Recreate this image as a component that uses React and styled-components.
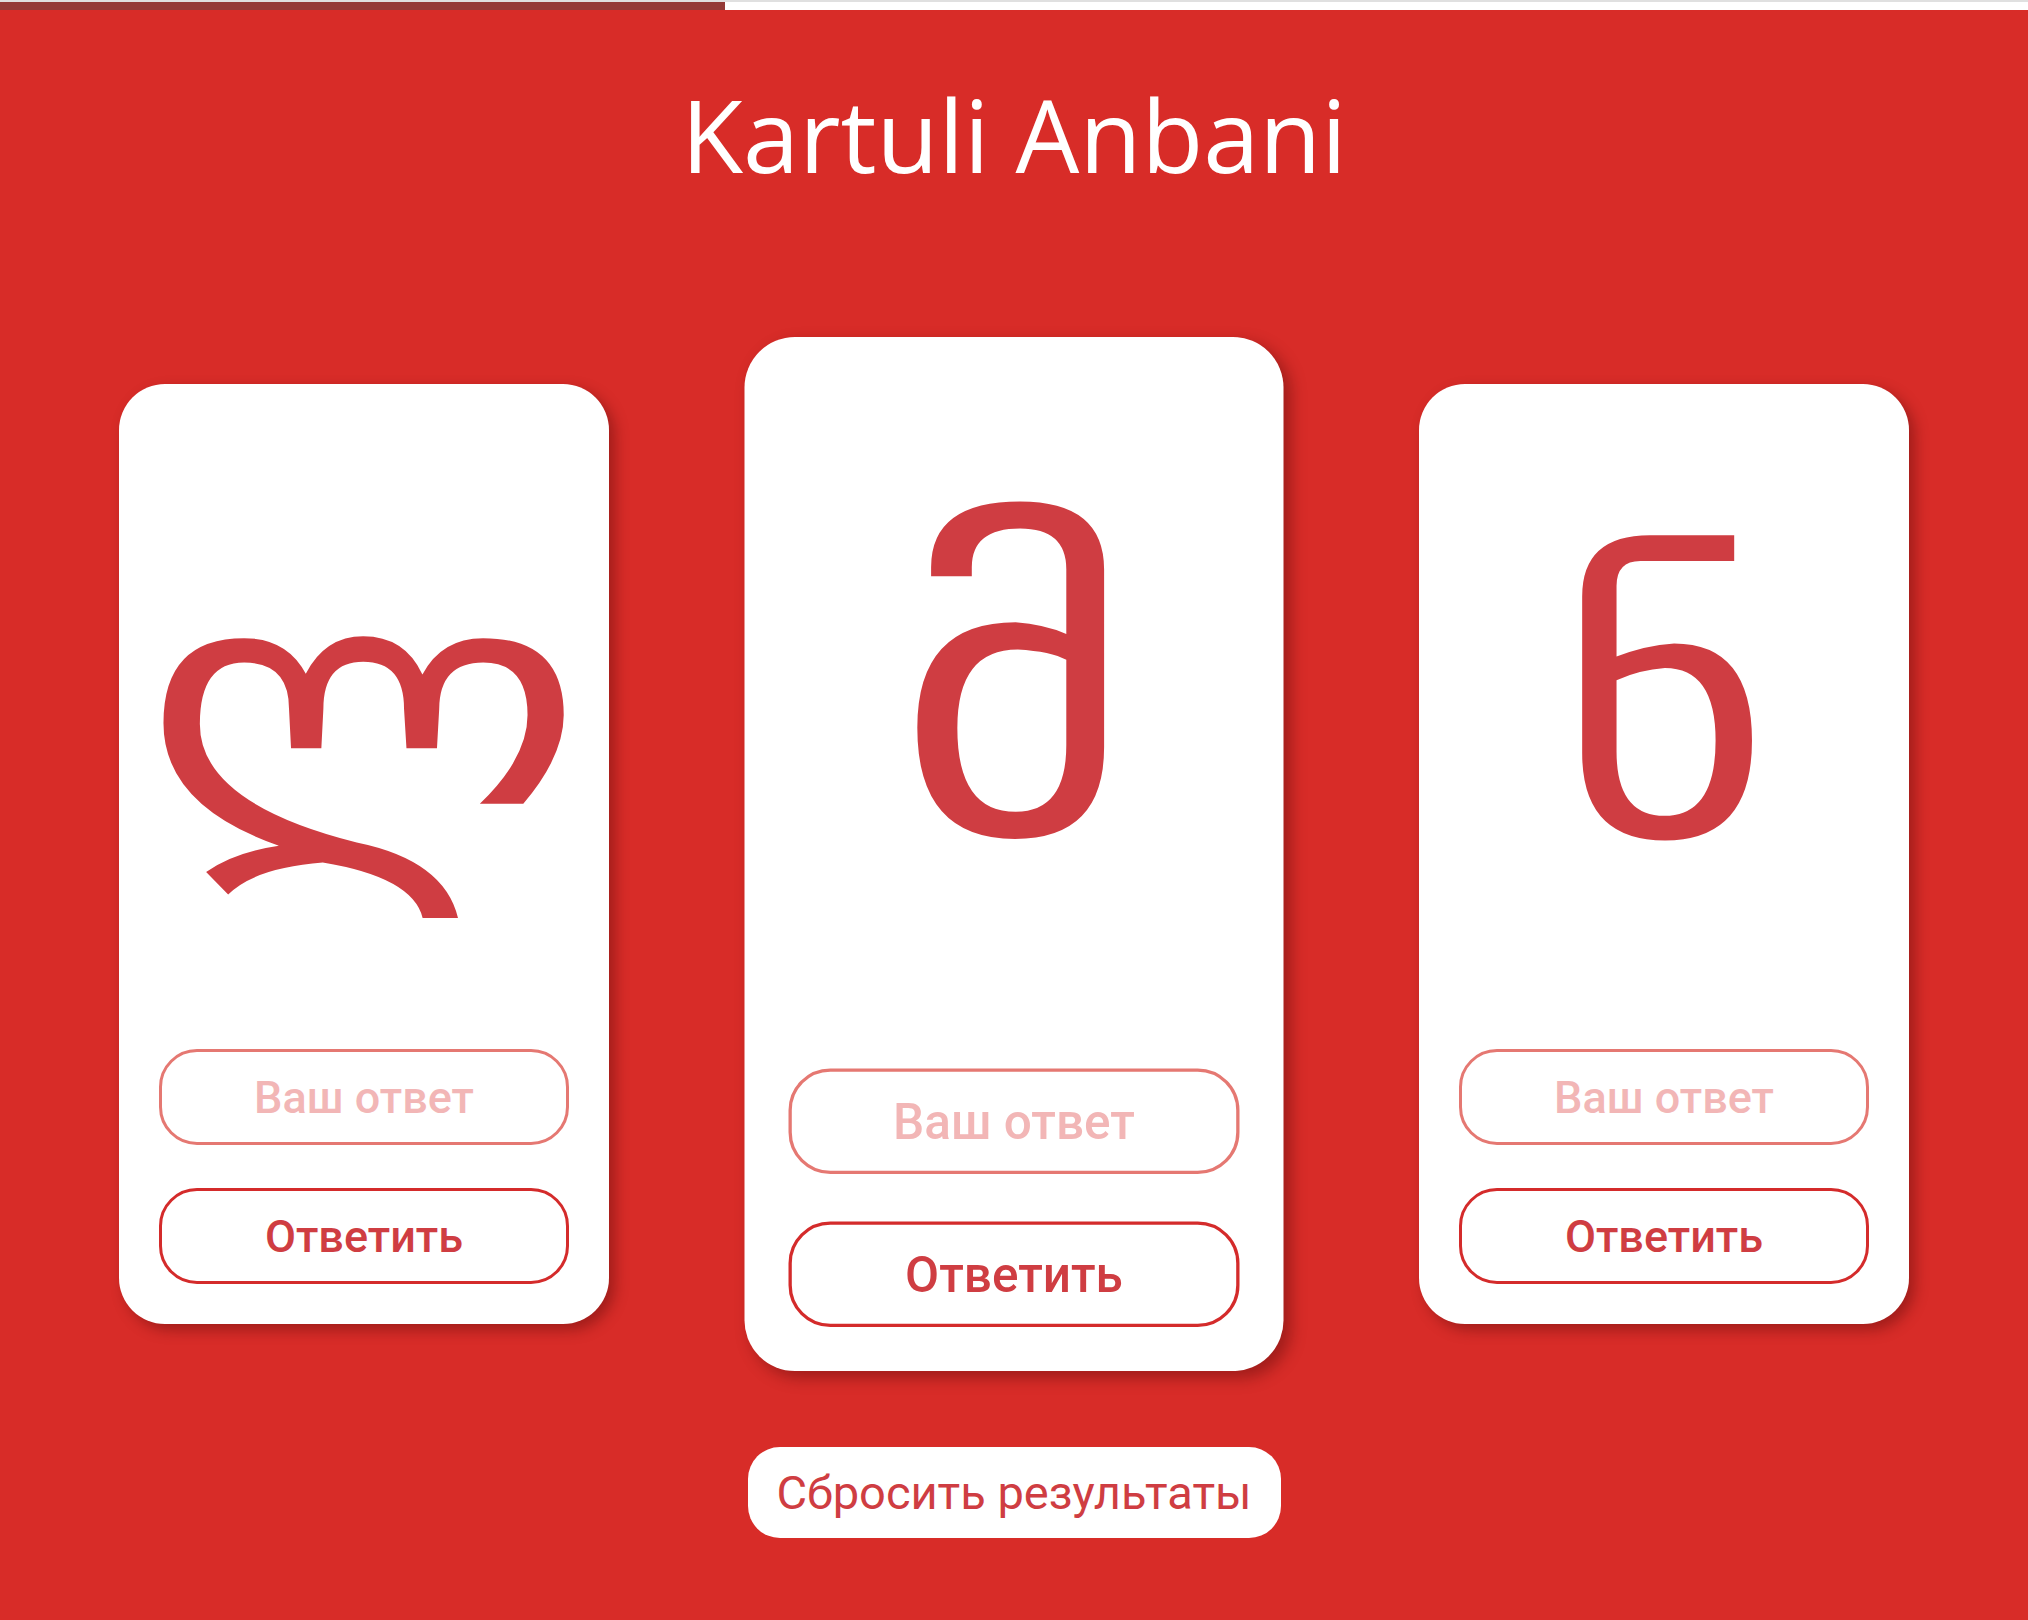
import React, { useState } from "react";
import styled, { createGlobalStyle } from "styled-components";

const GlobalStyle = createGlobalStyle`
  html, body {
    margin: 0;
    padding: 0;
    background: #d82c28;
  }
  body {
    border-top: 2px solid #e0e0e0;
    min-height: 1618px;
    font-family: "Open Sans", "Liberation Sans", sans-serif;
  }
`;

const Page = styled.div`
  display: flex;
  flex-direction: column;
  align-items: center;
`;

const Progress = styled.div`
  align-self: stretch;
  height: 8px;
  background: #ffffff;
`;

const ProgressFill = styled.div`
  height: 100%;
  background: #943a37;
`;

const Title = styled.h1`
  margin: 57px 0 0;
  font-family: "Open Sans", sans-serif;
  font-weight: 500;
  font-size: 101px;
  line-height: 134px;
  color: #ffffff;
`;

const CardRow = styled.div`
  display: flex;
  align-items: center;
  gap: 160px;
  margin-top: 183px;
`;

const Card = styled.div`
  width: 490px;
  height: 940px;
  box-sizing: border-box;
  padding: 40px;
  background: #ffffff;
  border-radius: 46px;
  box-shadow: 6px 6px 14px rgba(90, 10, 10, 0.45);
  display: flex;
  flex-direction: column;
  transform: scale(${(p) => (p.$active ? 1.1 : 1)});
`;

const Letter = styled.div`
  flex: 1;
  display: flex;
  justify-content: center;
  align-items: center;
  padding-bottom: 52px;
  font-family: "DejaVu Sans", sans-serif;
  font-size: 360px;
  line-height: 1;
  color: #cf3d42;
`;

const Glyph = styled.span`
  display: inline-block;
  transform: scaleX(1.15);
`;

const AnswerInput = styled.input`
  height: 96px;
  box-sizing: border-box;
  border: 3px solid #e57872;
  border-radius: 38px;
  outline: none;
  background: #ffffff;
  text-align: center;
  font-family: Roboto, "Liberation Sans", sans-serif;
  font-weight: 500;
  font-size: 45px;
  color: #cf3d42;
  &::placeholder {
    color: #f2b6b6;
  }
`;

const AnswerButton = styled.button`
  margin-top: 43px;
  height: 96px;
  box-sizing: border-box;
  border: 3px solid #d42b2b;
  border-radius: 38px;
  background: #ffffff;
  font-family: Roboto, "Liberation Sans", sans-serif;
  font-weight: 500;
  font-size: 45px;
  color: #cf3d42;
  cursor: pointer;
`;

const ResetButton = styled.button`
  margin-top: 123px;
  width: 533px;
  height: 91px;
  border: none;
  border-radius: 32px;
  background: #ffffff;
  font-family: Roboto, "Liberation Sans", sans-serif;
  font-weight: 400;
  font-size: 47px;
  color: #cf3d42;
  cursor: pointer;
`;

const letters = [
  { id: 1, char: "ლ" },
  { id: 2, char: "მ", active: true },
  { id: 3, char: "ნ" },
];

function App() {
  const [answers, setAnswers] = useState({});
  const progress = 35.75;

  return (
    <>
      <GlobalStyle />
      <Page>
        <Progress>
          <ProgressFill style={{ width: `${progress}%` }} />
        </Progress>
        <Title>Kartuli Anbani</Title>
        <CardRow>
          {letters.map((item) => (
            <Card key={item.id} $active={item.active}>
              <Letter>
                <Glyph>{item.char}</Glyph>
              </Letter>
              <AnswerInput
                placeholder="Ваш ответ"
                value={answers[item.id] || ""}
                onChange={(e) =>
                  setAnswers({ ...answers, [item.id]: e.target.value })
                }
              />
              <AnswerButton>Ответить</AnswerButton>
            </Card>
          ))}
        </CardRow>
        <ResetButton onClick={() => setAnswers({})}>
          Сбросить результаты
        </ResetButton>
      </Page>
    </>
  );
}

export default App;
